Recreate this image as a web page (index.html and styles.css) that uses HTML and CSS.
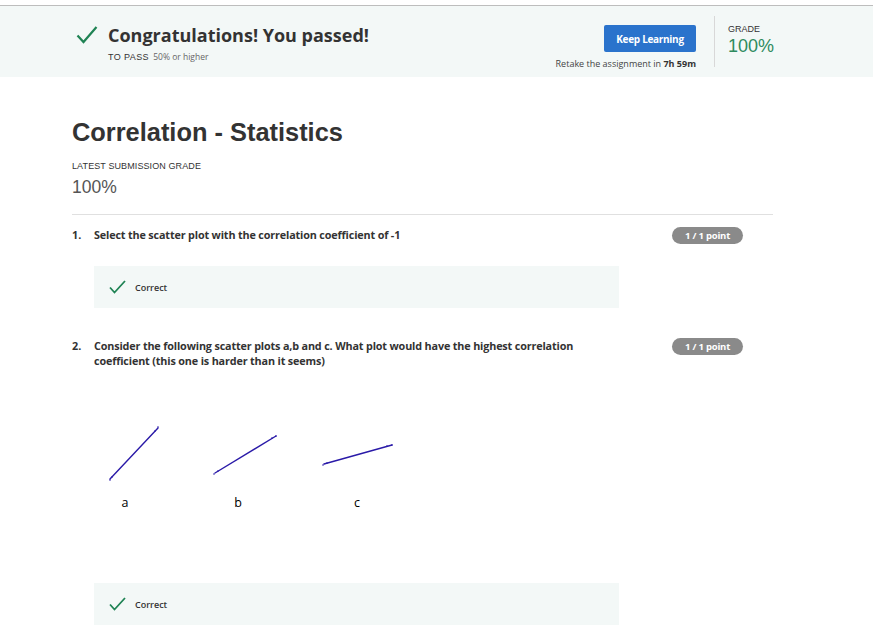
FILE: index.html
```html
<!DOCTYPE html>
<html>
<head>
<meta charset="utf-8">
<link rel="stylesheet" href="styles.css">
</head>
<body>
<div class="topline"></div>
<header class="banner">
  <div class="banner-main">
    <div class="banner-title">
      <svg class="check-big" width="22" height="20" viewBox="0 0 22 20"><path d="M1.5 10.5 L7.5 17 L20.5 2" fill="none" stroke="#1f8354" stroke-width="2.2"/></svg>
      <h1>Congratulations! You passed!</h1>
    </div>
    <div class="topass"><span class="tp-label">TO PASS</span> 50% or higher</div>
  </div>
  <div class="banner-action">
    <button class="btn">Keep Learning</button>
    <div class="retake">Retake the assignment in <b>7h 59m</b></div>
  </div>
  <div class="divider"></div>
  <div class="banner-grade">
    <div class="grade-label">GRADE</div>
    <div class="grade-value">100%</div>
  </div>
</header>

<main class="content">
  <h2 class="page-title">Correlation - Statistics</h2>
  <div class="lsg">LATEST SUBMISSION GRADE</div>
  <div class="lsg-value">100%</div>
  <hr class="rule">

  <section class="question q1">
    <div class="q-head">
      <span class="q-num">1.</span>
      <div class="q-text">Select the scatter plot with the correlation coefficient of -1</div>
      <span class="badge">1 / 1 point</span>
    </div>
    <div class="feedback">
      <svg width="17" height="14" viewBox="0 0 17 14"><path d="M1 7.5 L5.5 12.5 L16 1" fill="none" stroke="#1f8354" stroke-width="1.8"/></svg>
      <span>Correct</span>
    </div>
  </section>

  <section class="question q2">
    <div class="q-head">
      <span class="q-num">2.</span>
      <div class="q-text">Consider the following scatter plots a,b and c. What plot would have the highest correlation coefficient (this one is harder than it seems)</div>
      <span class="badge">1 / 1 point</span>
    </div>
    <div class="plots">
      <svg width="330" height="100" viewBox="0 0 330 100">
        <g stroke="#2a1aa8" stroke-width="1.4" fill="none" stroke-linecap="round">
          <line x1="16" y1="62" x2="64" y2="11"/>
          <line x1="121" y1="56" x2="182" y2="19"/>
          <line x1="230" y1="47" x2="298" y2="28"/>
        </g>
        <g fill="#2a1aa8">
          <circle cx="16" cy="63" r="0.8"/><circle cx="18" cy="60" r="0.8"/><circle cx="64" cy="10" r="0.8"/><circle cx="61" cy="14" r="0.8"/>
          <circle cx="120" cy="57" r="0.8"/><circle cx="124" cy="54" r="0.8"/><circle cx="182" cy="19" r="0.8"/><circle cx="178" cy="21" r="0.8"/>
          <circle cx="229" cy="48" r="0.8"/><circle cx="233" cy="46" r="0.8"/><circle cx="298" cy="28" r="0.8"/><circle cx="293" cy="29" r="0.8"/>
        </g>
        <g class="plot-labels" text-anchor="middle">
          <text x="31" y="90">a</text>
          <text x="144" y="90">b</text>
          <text x="263" y="90">c</text>
        </g>
      </svg>
    </div>
    <div class="feedback">
      <svg width="17" height="14" viewBox="0 0 17 14"><path d="M1 7.5 L5.5 12.5 L16 1" fill="none" stroke="#1f8354" stroke-width="1.8"/></svg>
      <span>Correct</span>
    </div>
  </section>
</main>
</body>
</html>
```

FILE: styles.css
```css
html, body {
  margin: 0;
  padding: 0;
  background: #fff;
  font-family: "Open Sans", "Noto Sans", sans-serif;
  color: #333;
}

.topline {
  height: 5px;
  border-bottom: 1px solid #bdbdbd;
}

.banner {
  height: 71px;
  background: #f3f8f7;
  display: flex;
  align-items: flex-start;
  padding-left: 76px;
  box-sizing: border-box;
}

.banner-main {
  flex: 1;
  padding-top: 17px;
}

.banner-title {
  display: flex;
  align-items: center;
}

.check-big {
  margin-right: 10px;
}

.banner-title h1 {
  margin: 0;
  font-size: 18px;
  font-weight: 700;
  color: #333;
  line-height: 24px;
}

.topass {
  margin-top: 4px;
  margin-left: 32px;
  font-size: 8.5px;
  color: #666;
}

.tp-label {
  color: #333;
  font-family: "Liberation Sans", Arial, sans-serif;
  font-size: 9px;
  letter-spacing: 0.4px;
  margin-right: 2px;
}

.banner-action {
  display: flex;
  flex-direction: column;
  align-items: flex-end;
  padding-top: 19px;
}

.btn {
  width: 92px;
  height: 27px;
  border: none;
  border-radius: 2px;
  background: #2a73cc;
  color: #fff;
  font-family: "Open Sans", sans-serif;
  font-weight: 700;
  font-size: 10px;
  letter-spacing: -0.3px;
  padding: 0;
}

.retake {
  margin-top: 5px;
  font-size: 9px;
  color: #444;
  white-space: nowrap;
}

.retake b {
  color: #333;
}

.divider {
  width: 1px;
  height: 51px;
  background: #d8d8d8;
  margin: 10px 13px 0 18px;
}

.banner-grade {
  width: 145px;
  padding-top: 18px;
}

.grade-label {
  font-family: "Liberation Sans", Arial, sans-serif;
  font-size: 9px;
  color: #333;
}

.grade-value {
  font-family: "Liberation Sans", Arial, sans-serif;
  font-size: 18px;
  color: #2e8b5e;
  margin-top: 2px;
}

.content {
  padding-left: 72px;
  width: 701px;
}

.page-title {
  font-family: "Liberation Sans", Arial, sans-serif;
  font-size: 25.4px;
  font-weight: 700;
  color: #333;
  margin: 40px 0 0;
  line-height: 30px;
}

.lsg {
  font-family: "Liberation Sans", Arial, sans-serif;
  font-size: 9px;
  color: #333;
  margin-top: 14px;
  letter-spacing: 0.1px;
}

.lsg-value {
  font-family: "Liberation Sans", Arial, sans-serif;
  font-size: 17.5px;
  color: #555;
  margin-top: 6px;
}

.rule {
  border: none;
  border-top: 1px solid #e0e0e0;
  margin: 16px 0 0;
}

.question {
  display: flex;
  flex-direction: column;
}

.q1 {
  padding-top: 12px;
}

.q2 {
  padding-top: 30px;
}

.q-head {
  display: flex;
  align-items: flex-start;
  width: 671px;
}

.q-num {
  width: 22px;
  font-size: 10.8px;
  font-weight: 700;
  line-height: 15px;
}

.q-text {
  width: 500px;
  font-size: 10.8px;
  font-weight: 700;
  line-height: 15px;
  letter-spacing: -0.15px;
  color: #333;
}

.badge {
  margin-left: auto;
  width: 71px;
  height: 17px;
  line-height: 17px;
  border-radius: 9px;
  background: #8a8a8a;
  color: #fff;
  font-size: 9.5px;
  font-weight: 700;
  text-align: center;
  margin-top: 0;
  letter-spacing: -0.2px;
}

.feedback {
  margin-left: 22px;
  width: 525px;
  height: 42px;
  background: #f3f8f7;
  display: flex;
  align-items: center;
  padding-left: 15px;
  box-sizing: border-box;
}

.q1 .feedback {
  margin-top: 22px;
}

.feedback svg {
  margin-right: 9px;
}

.feedback span {
  font-size: 9px;
  font-weight: 600;
  color: #333;
}

.plots {
  margin-top: 49px;
  margin-left: 22px;
  height: 100px;
}

.plots svg {
  display: block;
}

.plot-labels {
  font-family: "Open Sans", sans-serif;
  font-size: 12.5px;
  fill: #000;
}

.q2 .feedback {
  margin-top: 66px;
}
```
